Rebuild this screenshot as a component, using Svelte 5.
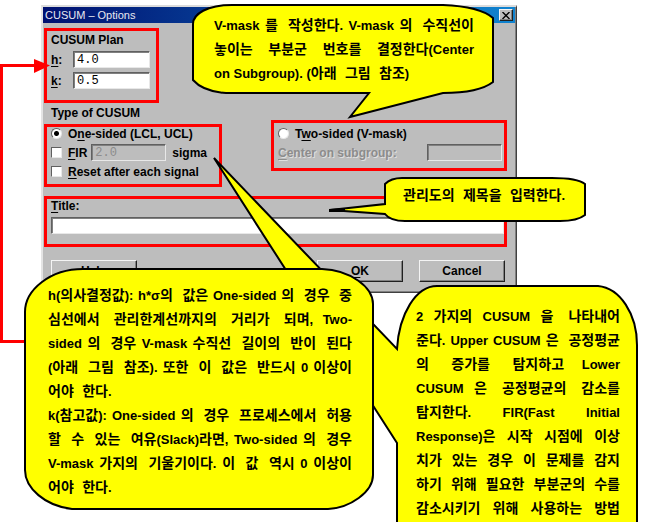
<script>
  let h = $state('4.0');
  let k = $state('0.5');
  let sigma = $state('2.0');
  let subgroup = $state('');
  let title = $state('');
  let type = $state('one');
  let fir = $state(false);
  let reset = $state(false);

  // A line marked "end" closes its paragraph and is not justified.
  const notes = [
    {
      name: 'vmask',
      lines: [
        { text: 'V-mask 를 작성한다. V-mask 의 수직선이' },
        { text: '놓이는 부분군 번호를 결정한다(Center' },
        { text: 'on Subgroup). (아래 그림 참조)', end: true }
      ]
    },
    { name: 'heading', lines: [{ text: '관리도의 제목을 입력한다.', end: true }] },
    {
      name: 'types-note',
      lines: [
        { text: '2 가지의 CUSUM 을 나타내어' },
        { text: '준다. Upper CUSUM 은 공정평균' },
        { text: '의 증가를 탐지하고 Lower' },
        { text: 'CUSUM 은 공정평균의 감소를' },
        { text: '탐지한다. FIR(Fast Initial' },
        { text: 'Response)은 시작 시점에 이상' },
        { text: '치가 있는 경우 이 문제를 감지' },
        { text: '하기 위해 필요한 부분군의 수를' },
        { text: '감소시키기 위해 사용하는 방법' }
      ]
    },
    {
      name: 'plan-note',
      lines: [
        { text: 'h(의사결정값): h*σ의 값은 One-sided 의 경우 중' },
        { text: '심선에서 관리한계선까지의 거리가 되며, Two-' },
        { text: 'sided 의 경우 V-mask 수직선 길이의 반이 된다' },
        { text: '(아래 그림 참조). 또한 이 값은 반드시 0 이상이' },
        { text: '어야 한다.', end: true },
        { text: 'k(참고값): One-sided 의 경우 프로세스에서 허용' },
        { text: '할 수 있는 여유(Slack)라면, Two-sided 의 경우' },
        { text: 'V-mask 가지의 기울기이다. 이 값 역시 0 이상이' },
        { text: '어야 한다.', end: true }
      ]
    }
  ];

  const shapes = {
    vmask:
      'M193 24C193 14 207 5 232 5H443C468 6 484 10 493 18V82C484 89 470 93 443 93L350 117L369 93H226C211 92 200 88 193 80Z',
    heading:
      'M385 184C389 180 393 178 402 178H552C566 178 580 180 585 184V215C580 219 572 221 560 221H405C394 221 388 218 385 214L330 210L385 204Z',
    'types-note':
      'M397 349C399 314 416 286 437 286H598C620 288 637 314 637 345V560H397V443L214 158Z',
    'plan-note':
      'M25 312C25 290 50 269 83 269H322C350 270 373 287 373 304V475C373 492 350 508 328 509H72C45 506 25 488 25 470Z'
  };

  // Splits a line into Hangul runs and everything else.
  const runs = (text) =>
    text.split(/([가-힣]+(?: +[가-힣]+)*)/).filter(Boolean).map((part) => ({
      part,
      hangul: /[가-힣]/.test(part)
    }));
</script>

<main>
  <form class="dialog" onsubmit={(e) => e.preventDefault()}>
    <header>
      <h1>CUSUM – Options</h1>
      <button type="button" class="close" aria-label="Close">
        <svg width="8" height="7" viewBox="0 0 8 7"><path d="M0.5 0L7.5 7M7.5 0L0.5 7" stroke="#000" stroke-width="1.4" /></svg>
      </button>
    </header>

    <div class="body">
      <section class="box plan">
        <h2>CUSUM Plan</h2>
        <div class="field"><label for="h"><u>h</u>:</label><input id="h" class="text" bind:value={h} /></div>
        <div class="field"><label for="k"><u>k</u>:</label><input id="k" class="text" bind:value={k} /></div>
      </section>

      <h2 class="type">Type of CUSUM</h2>
      <div class="types">
        <section class="box one">
          <label class="row"><input type="radio" name="type" value="one" bind:group={type} /><span>O<u>n</u>e-sided (LCL, UCL)</span></label>
          <div class="row">
            <input id="fir" type="checkbox" bind:checked={fir} /><label for="fir"><u>F</u>IR</label>
            <input class="text sigma" aria-label="FIR sigma" bind:value={sigma} disabled={!fir} /><span>sigma</span>
          </div>
          <label class="row"><input type="checkbox" bind:checked={reset} /><span><u>R</u>eset after each signal</span></label>
        </section>
        <section class="box two">
          <label class="row"><input type="radio" name="type" value="two" bind:group={type} /><span>T<u>w</u>o-sided (V-mask)</span></label>
          <div class="row center">
            <label for="sub"><u>C</u>enter on subgroup:</label>
            <input id="sub" class="text" bind:value={subgroup} disabled={type !== 'two'} />
          </div>
        </section>
      </div>

      <section class="box title">
        <label for="title"><u>T</u>itle:</label>
        <input id="title" class="text" bind:value={title} />
      </section>

      <footer>
        <button type="button">Help</button>
        <button type="submit" class="ok"><u>O</u>K</button>
        <button type="button">Cancel</button>
      </footer>
    </div>
  </form>

  <svg class="overlay" width="660" height="522" viewBox="0 0 660 522" aria-hidden="true">
    <path d="M30 341.5H1.5V65.5H36" fill="none" stroke="#f00" stroke-width="3" />
    <path d="M34 59L50 65.5L34 73Z" fill="#f00" />
  </svg>

  {#each notes as note}
    <svg class="overlay" width="660" height="522" viewBox="0 0 660 522" aria-hidden="true">
      <path d={shapes[note.name]} fill="#ff0" stroke="#000" stroke-width="2" />
      {#if note.name === 'heading'}<path d="M329 209L345 208V212L329 212Z" />{/if}
    </svg>
    <aside class={note.name}>
      {#each note.lines as line}
        <p class:end={line.end}>{#each runs(line.text) as run}<span class:hangul={run.hangul}>{run.part}</span>{/each}</p>
      {/each}
    </aside>
  {/each}
</main>

<style>
  :global(body) {
    margin: 0;
    background: #fff;
  }
  main {
    position: relative;
    box-sizing: border-box;
    height: 100vh;
    overflow: hidden;
    padding: 5px 143px 0 41px;
    font: bold 12px/20px 'Liberation Sans', 'Noto Sans CJK KR', sans-serif;
    color: #000;
  }
  h1, h2, p {
    margin: 0;
    font: inherit;
  }
  u {
    text-underline-offset: 2px;
  }
  .dialog {
    background: #bdbdbd;
    border: 2px solid;
    border-color: #dcdcdc #404040 #404040 #e4e4e4;
    border-right-width: 1px;
    border-bottom-width: 1px;
    box-shadow: inset -1px -1px #808080;
  }
  header {
    display: flex;
    align-items: center;
    justify-content: space-between;
    height: 16px;
    margin-right: 1px;
    padding: 0 2px;
    background: linear-gradient(90deg, #001070, #1084d0);
    color: #e8e8f0;
  }
  h1 {
    font-size: 11px;
    font-weight: normal;
    line-height: 16px;
  }
  button {
    box-sizing: border-box;
    width: 86px;
    height: 22px;
    padding: 0;
    font: inherit;
    line-height: 18px;
    color: #000;
    background: #bdbdbd;
    border: 1px solid;
    border-color: #f4f4f4 #202020 #202020 #f4f4f4;
    box-shadow: inset -1px -1px #808080;
  }
  .close {
    display: grid;
    place-items: center;
    width: 14px;
    height: 12px;
  }
  .body {
    padding: 5px 9px 10px 1px;
  }
  .box {
    box-sizing: border-box;
    border: 3px solid #f00;
  }
  .plan {
    width: 115px;
    padding: 0 6px 9px 4px;
  }
  .plan h2 {
    line-height: 18px;
  }
  .field {
    display: flex;
    align-items: center;
    height: 21px;
  }
  .field label {
    width: 22px;
  }
  .text {
    box-sizing: border-box;
    flex: 1;
    min-width: 0;
    height: 17px;
    padding: 0 3px;
    font: 12px/14px 'Liberation Mono', monospace;
    color: #000;
    background: #fff;
    border: 1px solid;
    border-color: #606060 #e8e8e8 #e8e8e8 #606060;
    border-radius: 0;
    box-shadow: inset 1px 1px #808080;
  }
  .text:disabled {
    background: #bdbdbd;
    color: #8c8c8c;
  }
  .type {
    line-height: 21px;
    padding-left: 7px;
  }
  .types {
    display: flex;
    justify-content: space-between;
    align-items: flex-start;
    margin-top: -4px;
  }
  .one,
  .two {
    display: flex;
    flex-direction: column;
    gap: 6px;
  }
  .one {
    width: 178px;
    margin-top: 4px;
    padding: 0 4px 6px;
  }
  .two {
    width: 236px;
    padding: 4px 2px 9px 4px;
  }
  .row {
    display: flex;
    align-items: center;
    height: 13px;
  }
  input[type='radio'],
  input[type='checkbox'] {
    appearance: none;
    box-sizing: border-box;
    flex: none;
    width: 11px;
    height: 11px;
    margin: 0 6px 0 0;
    background: #fff;
    border: 1px solid;
    border-color: #606060 #e8e8e8 #e8e8e8 #606060;
  }
  input[type='radio'] {
    border-radius: 50%;
  }
  input[type='radio']:checked {
    background: radial-gradient(circle, #000 2px, #fff 3px);
  }
  input[type='checkbox']:checked {
    background: #000;
    box-shadow: inset 0 0 0 2px #fff;
  }
  .sigma {
    flex: none;
    width: 75px;
    margin: 0 6px 0 4px;
  }
  .center {
    color: #8c8c8c;
    text-shadow: 1px 1px #e0e0e0;
  }
  .center .text {
    flex: none;
    width: 75px;
    margin-left: auto;
  }
  .title {
    display: flex;
    flex-direction: column;
    gap: 4px;
    margin-top: 9px;
    padding: 0 0 10px 4px;
  }
  .title label {
    line-height: 14px;
  }
  .title .text {
    flex: none;
  }
  footer {
    display: flex;
    gap: 16px;
    padding: 13px 2px 0 7px;
  }
  .ok {
    margin-left: auto;
  }
  .overlay {
    position: absolute;
    left: 0;
    top: 0;
    pointer-events: none;
  }
  aside {
    position: absolute;
    font-size: 13px;
    line-height: 24px;
  }
  p {
    height: 24px;
    white-space: nowrap;
    text-align: justify;
    text-align-last: justify;
  }
  .end {
    text-align-last: left;
  }
  /* The mono face supplies the wide spaces between Hangul words. */
  .hangul {
    font-family: 'Liberation Mono', 'Noto Sans CJK KR', monospace;
    font-size: 14px;
  }
  .vmask {
    left: 214px;
    top: 14px;
    width: 260px;
  }
  .heading {
    left: 403px;
    top: 184px;
    width: 166px;
  }
  .types-note {
    left: 416px;
    top: 305px;
    width: 204px;
  }
  .plan-note {
    left: 48px;
    top: 284px;
    width: 304px;
  }
</style>
